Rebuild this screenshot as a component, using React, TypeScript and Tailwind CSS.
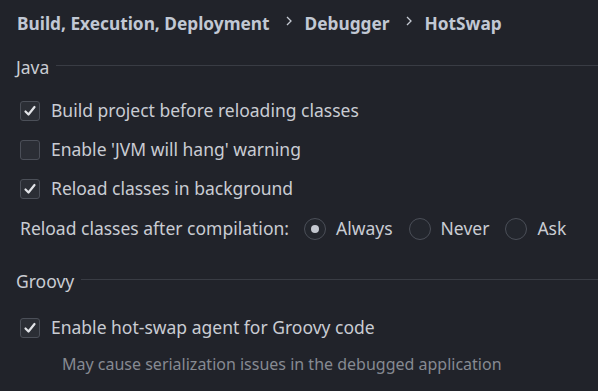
import React from "react";

function Check({ checked }: { checked: boolean }) {
  return (
    <div className="w-[20px] h-[20px] rounded-[3px] border border-[#4b4f58] bg-[#2b2e35] flex items-center justify-center shrink-0">
      {checked && (
        <svg width="14" height="14" viewBox="0 0 14 14">
          <path d="M2.5 7.5 L5.5 10.5 L11.5 3" fill="none" stroke="#e2e4e8" strokeWidth="2.2" strokeLinecap="round" strokeLinejoin="round" />
        </svg>
      )}
    </div>
  );
}

function Radio({ checked }: { checked: boolean }) {
  return (
    <div className="w-[22px] h-[22px] rounded-full border border-[#4b4f58] bg-[#23262d] flex items-center justify-center shrink-0">
      {checked && <div className="w-[8px] h-[8px] rounded-full bg-[#c3c7cf]" />}
    </div>
  );
}

function Chevron() {
  return (
    <svg width="8" height="12" viewBox="0 0 8 12" className="ml-[15px] mr-[12px] mb-[5px]">
      <path d="M2 2 L6 6 L2 10" fill="none" stroke="#c4c9d2" strokeWidth="1.3" />
    </svg>
  );
}

export default function App() {
  return (
    <div
      className="w-[598px] h-[391px] bg-[#21232a] text-[#c9ccd3] overflow-hidden"
      style={{ fontFamily: '"Noto Sans", "Open Sans", sans-serif' }}
    >
      <div className="flex items-center h-[46px] pl-[17px] pt-[1px] text-[17.3px] font-bold text-[#c1c8d4]">
        <span>Build, Execution, Deployment</span>
        <Chevron />
        <span>Debugger</span>
        <Chevron />
        <span>HotSwap</span>
      </div>

      <div className="flex items-center gap-[7px] pl-[16px] h-[42px] text-[17.5px]">
        <span>Java</span>
        <div className="flex-1 h-px bg-[#393c44] mb-[4px]" />
      </div>

      <div className="flex flex-col pl-[20px] mt-[3px] text-[17.5px]">
        <div className="flex items-center gap-[11px] h-[39px]">
          <Check checked />
          <span>Build project before reloading classes</span>
        </div>
        <div className="flex items-center gap-[11px] h-[39px]">
          <Check checked={false} />
          <span>Enable 'JVM will hang' warning</span>
        </div>
        <div className="flex items-center gap-[11px] h-[39px]">
          <Check checked />
          <span>Reload classes in background</span>
        </div>
        <div className="flex items-center h-[41px]">
          <span className="mr-[15px]">Reload classes after compilation:</span>
          <Radio checked />
          <span className="ml-[10px] mr-[16px]">Always</span>
          <Radio checked={false} />
          <span className="ml-[10px] mr-[16px]">Never</span>
          <Radio checked={false} />
          <span className="ml-[10px]">Ask</span>
        </div>
      </div>

      <div className="flex items-center gap-[7px] pl-[16px] h-[46px] mt-[9px] text-[17.5px]">
        <span>Groovy</span>
        <div className="flex-1 h-px bg-[#393c44] mb-[4px]" />
      </div>

      <div className="flex flex-col pl-[20px] mt-[4px] text-[17.5px]">
        <div className="flex items-center gap-[11px] h-[39px]">
          <Check checked />
          <span>Enable hot-swap agent for Groovy code</span>
        </div>
        <div className="pl-[42px] h-[34px] flex items-center text-[#868a92] text-[16px]">
          May cause serialization issues in the debugged application
        </div>
      </div>
    </div>
  );
}
